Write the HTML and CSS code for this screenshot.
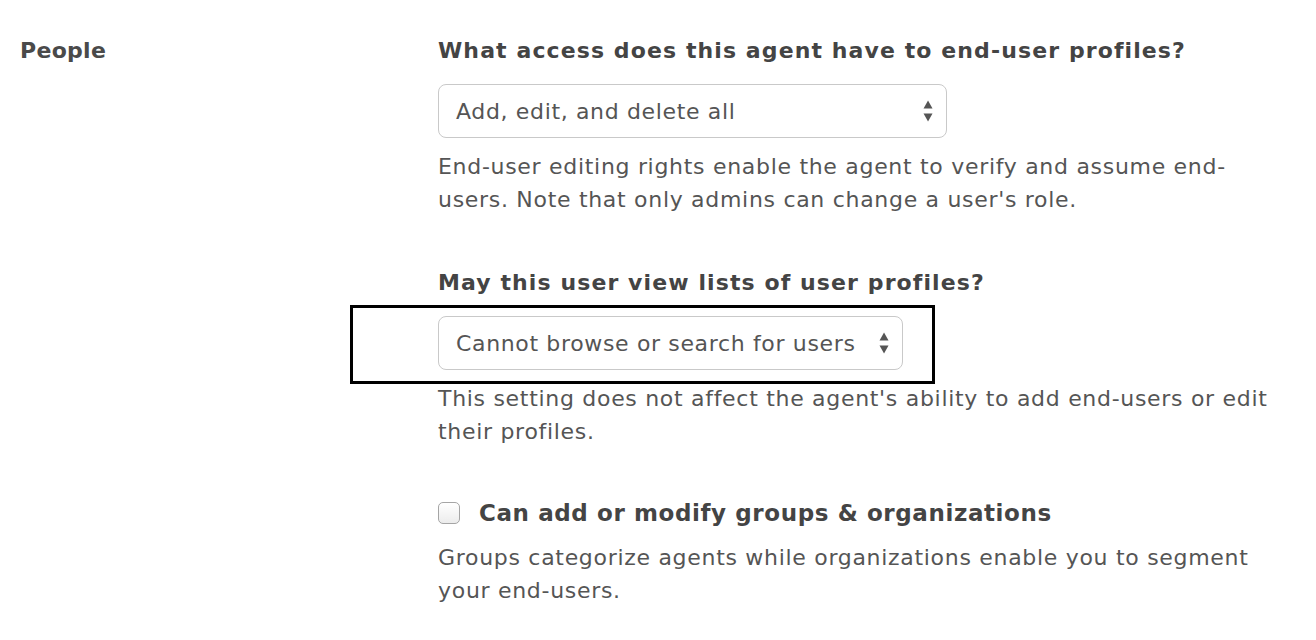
FILE: index.html
```html
<!DOCTYPE html>
<html>
<head>
<meta charset="utf-8">
<link rel="stylesheet" href="styles.css">
</head>
<body>
<div class="section">
  <div class="section-title">People</div>
  <div class="section-body">
    <div class="field">
      <div class="field-label">What access does this agent have to end-user profiles?</div>
      <div class="select-wrap">
        <div class="select select-1">
          <span class="select-value">Add, edit, and delete all</span>
          <svg class="arrows" width="10" height="22" viewBox="0 0 10 22"><path d="M5 0.5 L9.5 8.5 L0.5 8.5 Z" fill="#555"/><path d="M0.5 13.5 L9.5 13.5 L5 21.5 Z" fill="#555"/></svg>
        </div>
      </div>
      <p class="hint">End-user editing rights enable the agent to verify and assume end-users. Note that only admins can change a user's role.</p>
    </div>
    <div class="field field-2">
      <div class="field-label">May this user view lists of user profiles?</div>
      <div class="select-wrap">
        <div class="select select-2">
          <span class="select-value">Cannot browse or search for users</span>
          <svg class="arrows" width="10" height="22" viewBox="0 0 10 22"><path d="M5 0.5 L9.5 8.5 L0.5 8.5 Z" fill="#555"/><path d="M0.5 13.5 L9.5 13.5 L5 21.5 Z" fill="#555"/></svg>
        </div>
        <div class="highlight"></div>
      </div>
      <p class="hint">This setting does not affect the agent's ability to add end-users or edit their profiles.</p>
    </div>
    <div class="field">
      <label class="check-label"><span class="checkbox"></span>Can add or modify groups &amp; organizations</label>
      <p class="hint hint-check">Groups categorize agents while organizations enable you to segment your end-users.</p>
    </div>
  </div>
</div>
</body>
</html>
```
FILE: styles.css
```css
html, body {
  margin: 0;
  padding: 0;
  background: #fff;
}
body {
  font-family: "DejaVu Sans", "Liberation Sans", sans-serif;
  color: #555;
}
.section {
  display: grid;
  grid-template-columns: 418px 845px;
  padding: 37px 0 0 20px;
}
.section-title {
  font-weight: bold;
  font-size: 22px;
  letter-spacing: 0.3px;
  line-height: 28px;
  color: #4a4a4a;
}
.field {
  margin-bottom: 53px;
}
.field-2 {
  margin-bottom: 50px;
}
.field-label {
  font-weight: bold;
  font-size: 22px;
  letter-spacing: 1.1px;
  line-height: 28px;
  color: #444;
}
.select-wrap {
  position: relative;
  margin-top: 19px;
  margin-bottom: 12px;
}
.select {
  display: inline-flex;
  align-items: center;
  justify-content: space-between;
  box-sizing: border-box;
  height: 54px;
  padding: 0 13px 0 17px;
  border: 1.5px solid #c9c9c9;
  border-radius: 8px;
  background: #fff;
  font-size: 22px;
  letter-spacing: 0.65px;
  color: #555;
}
.select-1 { width: 509px; }
.select-2 { width: 465px; }
.arrows { flex: none; }
.highlight {
  position: absolute;
  left: -88px;
  top: -11px;
  width: 585px;
  height: 79px;
  box-sizing: border-box;
  border: 3px solid #000;
  pointer-events: none;
}
.hint {
  margin: 0;
  font-size: 22px;
  letter-spacing: 0.7px;
  line-height: 33px;
  color: #555;
}
.hint-check {
  margin-top: 13px;
}
.check-label {
  display: flex;
  align-items: center;
  font-weight: bold;
  font-size: 23px;
  letter-spacing: 0.6px;
  line-height: 30px;
  color: #444;
}
.checkbox {
  flex: none;
  width: 22px;
  height: 22px;
  box-sizing: border-box;
  border: 1.5px solid #a5a5a5;
  border-radius: 5px;
  background: linear-gradient(#fff, #ececec);
  margin-right: 19px;
}
```
